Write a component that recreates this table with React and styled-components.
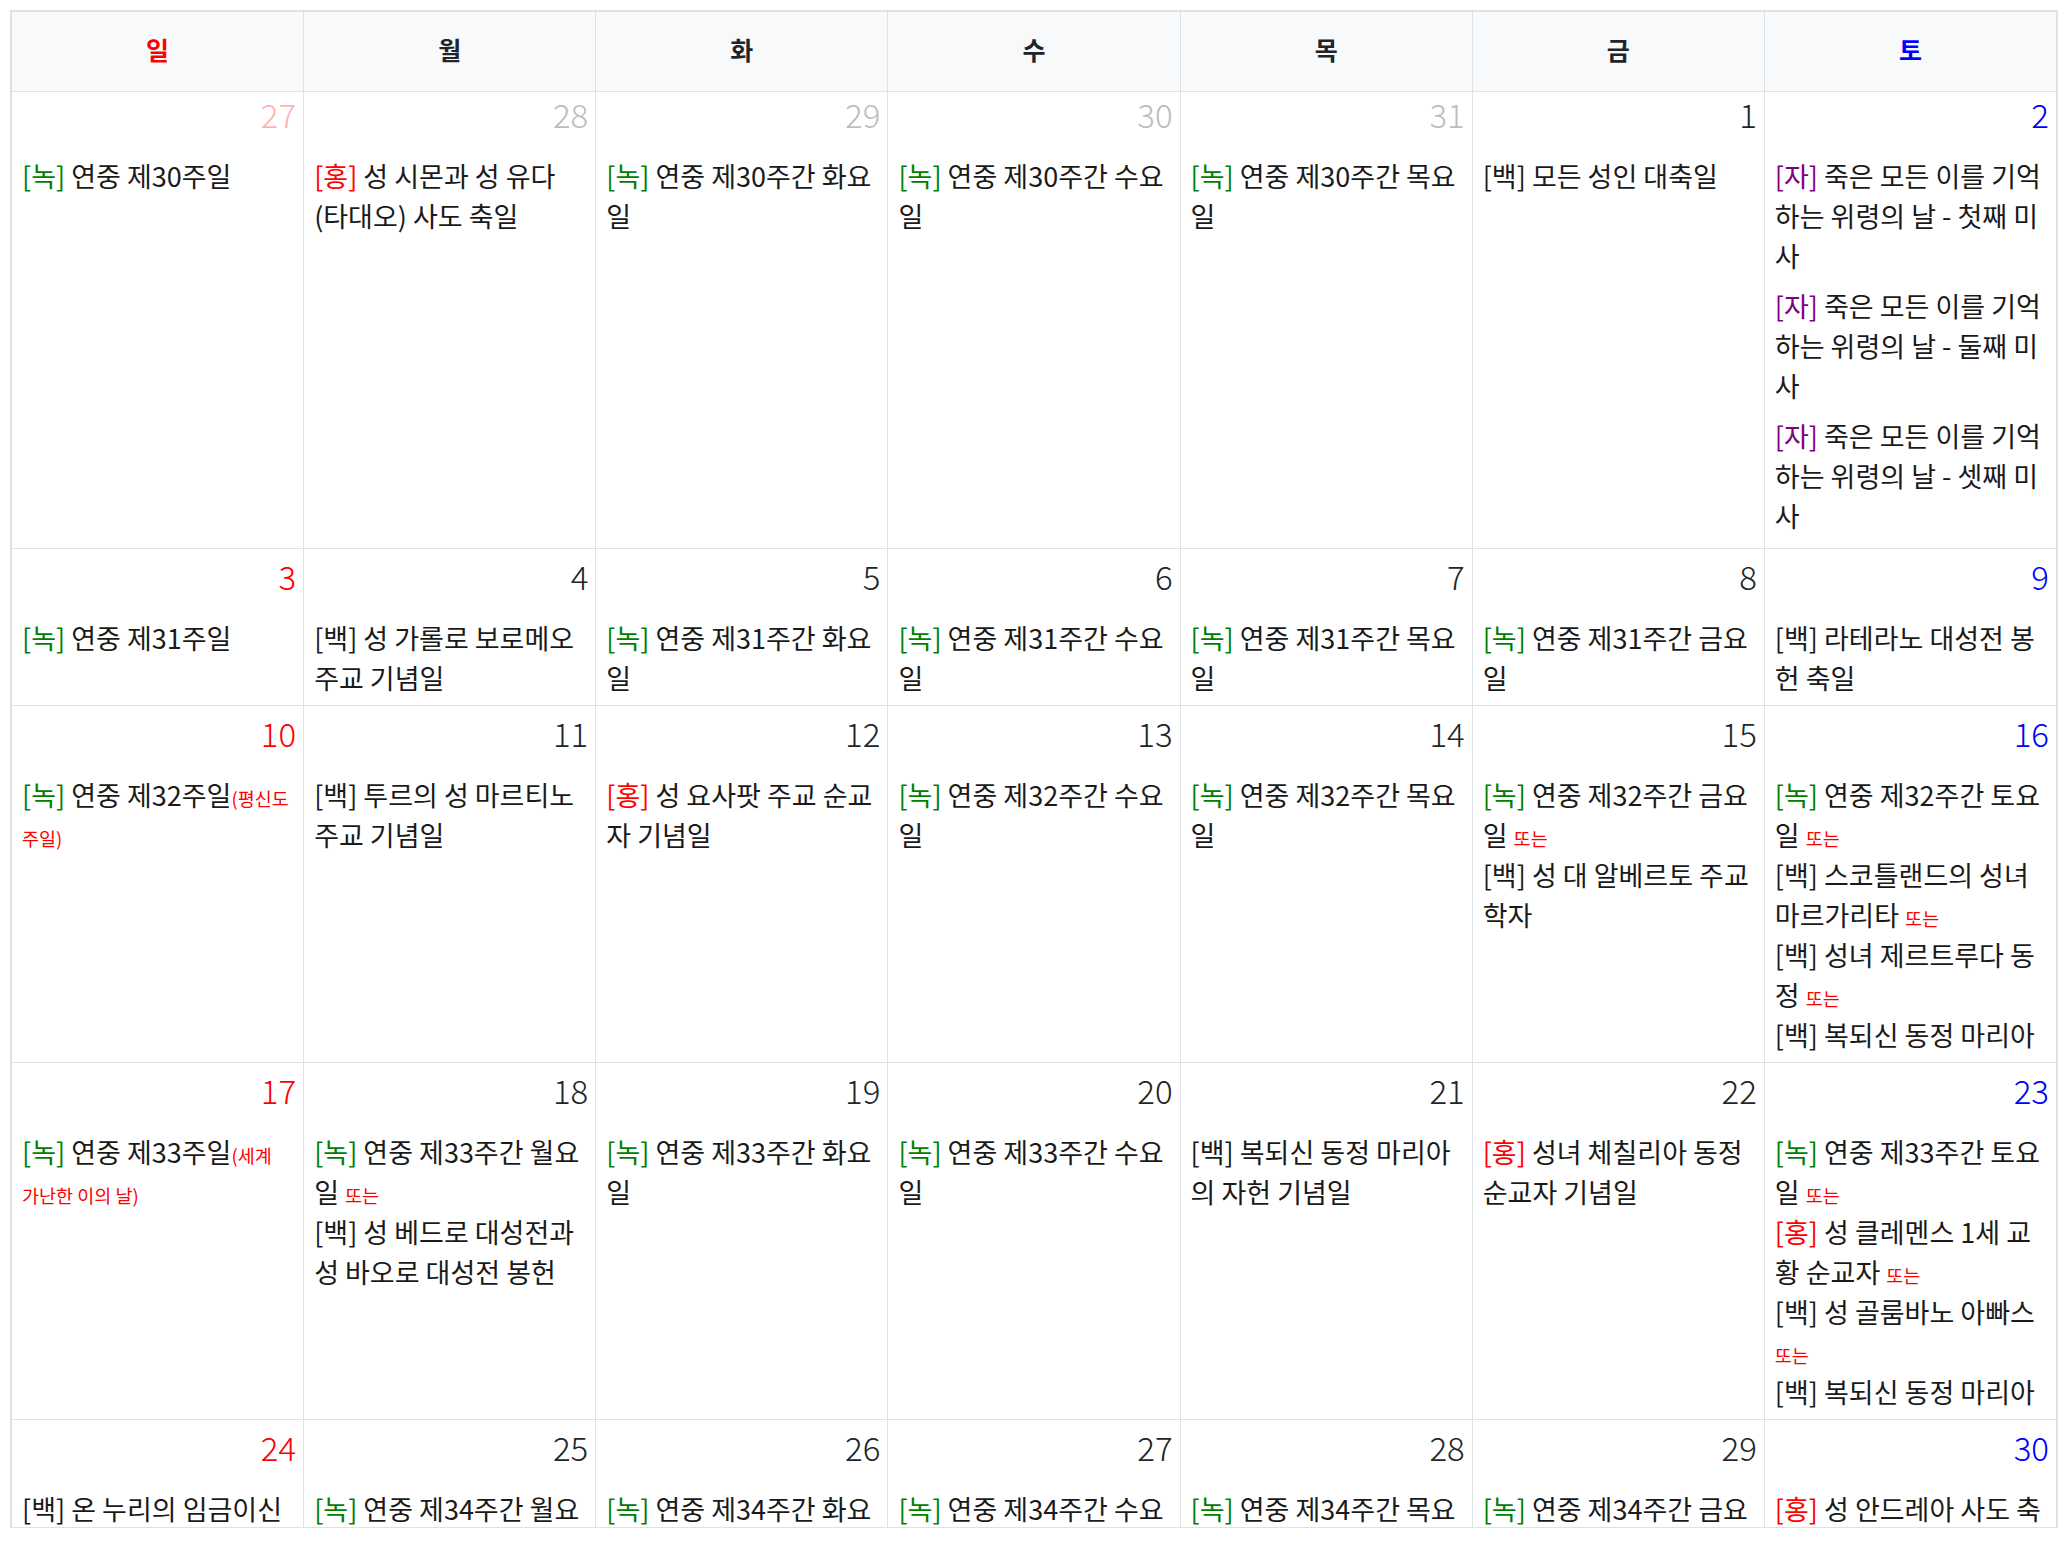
import React from "react";
import styled, { createGlobalStyle } from "styled-components";

const GlobalStyle = createGlobalStyle`
  html, body {
    margin: 0;
    padding: 0;
    background: #fff;
  }
  body {
    font-family: "Noto Sans CJK KR", "Noto Sans", sans-serif;
    color: #212529;
  }
`;

const Page = styled.div`
  padding: 10px 14px 0 10px;
`;

const Frame = styled.div`
  width: 2048px;
  height: 1518px;
  box-sizing: border-box;
  border: 1px solid #dee2e6;
  overflow: hidden;
`;

const Table = styled.table`
  width: 100%;
  border-collapse: collapse;
  table-layout: fixed;
`;

const toneColor = {
  sun: "#ff0000",
  sat: "#0000ff",
  none: "#212529",
};

const HeadCell = styled.th`
  height: 74px;
  padding: 0 0 5px;
  background: #f8f9fa;
  border: 1px solid #dee2e6;
  font-size: 25px;
  font-weight: 700;
  color: ${(p) => toneColor[p.$tone]};
`;

const Cell = styled.td`
  vertical-align: top;
  padding: ${(p) => (p.$first ? "2px 7px 12px 10px" : "7px 7px 7px 10px")};
  border: 1px solid #dee2e6;
`;

const DayNum = styled.div`
  text-align: right;
  font-size: 33px;
  font-weight: 300;
  line-height: 40px;
  color: ${(p) => toneColor[p.$tone]};
  opacity: ${(p) => (p.$out ? 0.3 : 1)};
`;

const Events = styled.div`
  margin-top: 22px;
  padding-right: 4px;
  font-size: 27px;
  line-height: 40px;
  color: #1a1a1a;
`;

const Block = styled.div`
  & + & {
    margin-top: 10px;
  }
`;

const tagColor = {
  녹: "#008000",
  홍: "#ff0000",
  자: "#800080",
  백: "#1a1a1a",
};

const Tag = styled.span`
  color: ${(p) => tagColor[p.$c]};
`;

const Small = styled.span`
  font-size: 18.5px;
  line-height: 1;
  color: #ff0000;
`;

const weeks = [
  [
    { d: 27, out: true, ev: [[{ c: "녹", t: "연중 제30주일" }]] },
    { d: 28, out: true, ev: [[{ c: "홍", t: "성 시몬과 성 유다(타대오) 사도 축일" }]] },
    { d: 29, out: true, ev: [[{ c: "녹", t: "연중 제30주간 화요일" }]] },
    { d: 30, out: true, ev: [[{ c: "녹", t: "연중 제30주간 수요일" }]] },
    { d: 31, out: true, ev: [[{ c: "녹", t: "연중 제30주간 목요일" }]] },
    { d: 1, ev: [[{ c: "백", t: "모든 성인 대축일" }]] },
    {
      d: 2,
      ev: [
        [{ c: "자", t: "죽은 모든 이를 기억하는 위령의 날 - 첫째 미사" }],
        [{ c: "자", t: "죽은 모든 이를 기억하는 위령의 날 - 둘째 미사" }],
        [{ c: "자", t: "죽은 모든 이를 기억하는 위령의 날 - 셋째 미사" }],
      ],
    },
  ],
  [
    { d: 3, ev: [[{ c: "녹", t: "연중 제31주일" }]] },
    { d: 4, ev: [[{ c: "백", t: "성 가롤로 보로메오 주교 기념일" }]] },
    { d: 5, ev: [[{ c: "녹", t: "연중 제31주간 화요일" }]] },
    { d: 6, ev: [[{ c: "녹", t: "연중 제31주간 수요일" }]] },
    { d: 7, ev: [[{ c: "녹", t: "연중 제31주간 목요일" }]] },
    { d: 8, ev: [[{ c: "녹", t: "연중 제31주간 금요일" }]] },
    { d: 9, ev: [[{ c: "백", t: "라테라노 대성전 봉헌 축일" }]] },
  ],
  [
    { d: 10, ev: [[{ c: "녹", t: "연중 제32주일", note: "(평신도 주일)" }]] },
    { d: 11, ev: [[{ c: "백", t: "투르의 성 마르티노 주교 기념일" }]] },
    { d: 12, ev: [[{ c: "홍", t: "성 요사팟 주교 순교자 기념일" }]] },
    { d: 13, ev: [[{ c: "녹", t: "연중 제32주간 수요일" }]] },
    { d: 14, ev: [[{ c: "녹", t: "연중 제32주간 목요일" }]] },
    {
      d: 15,
      ev: [
        [
          { c: "녹", t: "연중 제32주간 금요일" },
          { c: "백", t: "성 대 알베르토 주교 학자" },
        ],
      ],
    },
    {
      d: 16,
      ev: [
        [
          { c: "녹", t: "연중 제32주간 토요일" },
          { c: "백", t: "스코틀랜드의 성녀 마르가리타" },
          { c: "백", t: "성녀 제르트루다 동정" },
          { c: "백", t: "복되신 동정 마리아" },
        ],
      ],
    },
  ],
  [
    { d: 17, ev: [[{ c: "녹", t: "연중 제33주일", note: "(세계 가난한 이의 날)" }]] },
    {
      d: 18,
      ev: [
        [
          { c: "녹", t: "연중 제33주간 월요일" },
          { c: "백", t: "성 베드로 대성전과 성 바오로 대성전 봉헌" },
        ],
      ],
    },
    { d: 19, ev: [[{ c: "녹", t: "연중 제33주간 화요일" }]] },
    { d: 20, ev: [[{ c: "녹", t: "연중 제33주간 수요일" }]] },
    { d: 21, ev: [[{ c: "백", t: "복되신 동정 마리아의 자헌 기념일" }]] },
    { d: 22, ev: [[{ c: "홍", t: "성녀 체칠리아 동정 순교자 기념일" }]] },
    {
      d: 23,
      ev: [
        [
          { c: "녹", t: "연중 제33주간 토요일" },
          { c: "홍", t: "성 클레멘스 1세 교황 순교자" },
          { c: "백", t: "성 골룸바노 아빠스" },
          { c: "백", t: "복되신 동정 마리아" },
        ],
      ],
    },
  ],
  [
    { d: 24, ev: [[{ c: "백", t: "온 누리의 임금이신 예수 그리스도왕 대축일" }]] },
    { d: 25, ev: [[{ c: "녹", t: "연중 제34주간 월요일" }]] },
    { d: 26, ev: [[{ c: "녹", t: "연중 제34주간 화요일" }]] },
    { d: 27, ev: [[{ c: "녹", t: "연중 제34주간 수요일" }]] },
    { d: 28, ev: [[{ c: "녹", t: "연중 제34주간 목요일" }]] },
    { d: 29, ev: [[{ c: "녹", t: "연중 제34주간 금요일" }]] },
    { d: 30, ev: [[{ c: "홍", t: "성 안드레아 사도 축일" }]] },
  ],
];

const dayNames = ["일", "월", "화", "수", "목", "금", "토"];

const toneOf = (i) => (i === 0 ? "sun" : i === 6 ? "sat" : "none");

function DayCell({ day, col, first }) {
  return (
    <Cell $first={first}>
      <DayNum $tone={toneOf(col)} $out={day.out}>
        {day.d}
      </DayNum>
      <Events>
        {day.ev.map((items, bi) => (
          <Block key={bi}>
            {items.map((it, i) => (
              <React.Fragment key={i}>
                <Tag $c={it.c}>[{it.c}]</Tag> {it.t}
                {it.note && <Small>{it.note}</Small>}
                {i < items.length - 1 && (
                  <>
                    {" "}
                    <Small>또는</Small>
                    <br />
                  </>
                )}
              </React.Fragment>
            ))}
          </Block>
        ))}
      </Events>
    </Cell>
  );
}

export default function App() {
  return (
    <>
      <GlobalStyle />
      <Page>
        <Frame>
          <Table>
            <thead>
              <tr>
                {dayNames.map((n, i) => (
                  <HeadCell key={n} $tone={toneOf(i)}>
                    {n}
                  </HeadCell>
                ))}
              </tr>
            </thead>
            <tbody>
              {weeks.map((week, wi) => (
                <tr key={wi}>
                  {week.map((day, ci) => (
                    <DayCell key={ci} day={day} col={ci} first={wi === 0} />
                  ))}
                </tr>
              ))}
            </tbody>
          </Table>
        </Frame>
      </Page>
    </>
  );
}
